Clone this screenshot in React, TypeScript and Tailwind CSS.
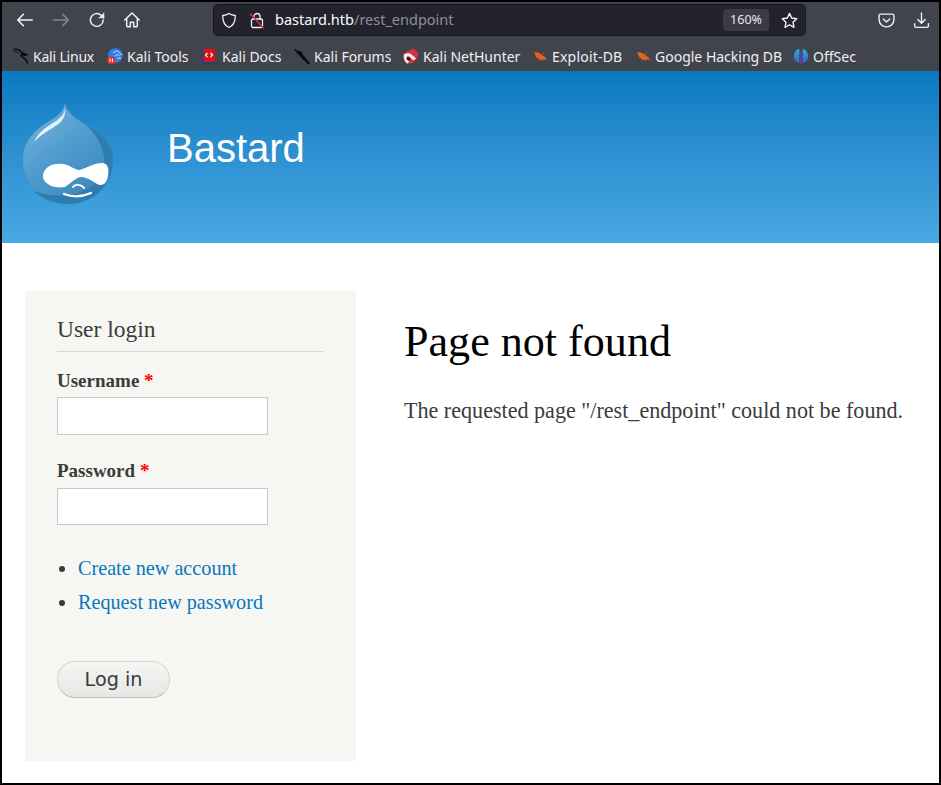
const bookmarks = [
  { name: "Kali Linux", icon: "kali", width: "w-[94px] tracking-[-0.2px]" },
  { name: "Kali Tools", icon: "tools", width: "w-[95px]" },
  { name: "Kali Docs", icon: "docs", width: "w-[92px]" },
  { name: "Kali Forums", icon: "forums", width: "w-[109px]" },
  { name: "Kali NetHunter", icon: "nethunter", width: "w-[129px]" },
  { name: "Exploit-DB", icon: "bug", width: "w-[103px] tracking-[0.2px]" },
  { name: "Google Hacking DB", icon: "bug", width: "w-[158px]" },
  { name: "OffSec", icon: "offsec", width: "" },
];

function BookmarkIcon({ type }: { type: string }) {
  if (type === "kali") {
    return (
      <svg width="16" height="16" viewBox="0 0 16 16" fill="none" stroke="#0b0b0b" strokeWidth="1.500" strokeLinecap="round">
        <path d="M1 1.500c3-.5 5.500.3 7 2.300 1.200 1.600 3 2.600 6.500 3-2.500.6-4.500.4-6-.3" />
        <path d="M8 6.500c-.5 1.800 1.500 2.800 3.500 4 1.500.9 2.500 2.500 3 4.500" />
        <path d="M1.500 3.500c1.500 0 3 .6 4 1.800" strokeWidth="1" />
      </svg>
    );
  }
  if (type === "tools") {
    return (
      <svg width="16" height="16" viewBox="0 0 16 16">
        <circle cx="8.300" cy="7.500" r="7.300" fill="#2f80e0" />
        <path d="M6 5c3-2.500 5-2.500 6-1 .8 1.200 1.500 2.500 3 3M8 8c2-1.500 3.500-1.500 4.500-.5M10 10.500c1-.6 2.500-.6 4 0" stroke="#cfe4fb" strokeWidth="0.900" fill="none" />
        <rect x="0.500" y="8.500" width="7.500" height="7.500" rx="2.500" fill="#e0322c" />
        <path d="M3 10.500v3.500M5.400 10.500v3.500" stroke="#fff" strokeWidth="1" />
      </svg>
    );
  }
  if (type === "docs") {
    return (
      <svg width="16" height="16" viewBox="0 0 16 16">
        <rect x="0" y="0.500" width="13" height="15.500" rx="1" fill="#1f3f7a" />
        <rect x="1.500" y="0.500" width="11.500" height="13.500" fill="#d7141a" />
        <path d="M5.500 5L3.500 7l2 2M8.500 5l2 2-2 2" stroke="#fff" strokeWidth="1.100" fill="none" />
      </svg>
    );
  }
  if (type === "forums") {
    return (
      <svg width="16" height="16" viewBox="0 0 16 16" fill="none" stroke="#0a0a0a" strokeLinecap="round">
        <path d="M1 1.500l4 3.500" strokeWidth="1.600" />
        <path d="M5 4.500l5 6" strokeWidth="3.200" />
        <path d="M10 10.500l4.500 4.500" strokeWidth="2.400" />
        <path d="M3 5.500l2-.5M7 3.500l.8 2" strokeWidth="1" />
      </svg>
    );
  }
  if (type === "nethunter") {
    return (
      <svg width="16" height="16" viewBox="0 0 16 16">
        <path d="M0.500 5.500L10.500 .5l5 4.500-1.500 5.500L9 15.500H3L.5 11z" fill="#d9303c" />
        <path d="M1 6.500c3-2 6-1.500 8 .5l4 3.500-2.500 2-3.500-3.500C5.500 7.500 3.500 8 3.300 10c-.1 1.500 1.200 2.700 3 3l-1.500 2.500C2 14.500 0 10 1 6.500z" fill="#f4f4f4" />
        <path d="M3.800 10c1-1.200 2.500-.8 3.700 1L6.300 13C4.800 12.500 3.400 11.300 3.800 10z" fill="#1c1c1c" />
      </svg>
    );
  }
  if (type === "bug") {
    return (
      <svg width="16" height="16" viewBox="0 0 16 16">
        <path d="M2 4.500C5 3.500 8 5 10 7c1.500 1 3 2 4.500 3.200-2 1.300-4.300 2-6.200 1.500C5.500 11 3.500 8 2 4.500z" fill="#e8601c" />
        <path d="M3.500 9.500L6 8.500M6.500 12.500L8 10.500M10.500 13l-.7-2.500M11.500 4.500L9.500 7M15 12l-3-1.300" stroke="#c9693a" strokeWidth="0.800" />
      </svg>
    );
  }
  return (
    <svg width="16" height="16" viewBox="0 0 16 16">
      <defs>
        <linearGradient id="offsecFill" x1="0" y1="0" x2="0" y2="1">
          <stop offset="0" stopColor="#27b4cf" />
          <stop offset="1" stopColor="#3a5fd0" />
        </linearGradient>
      </defs>
      <path d="M6.300 1C3 1.500 1 4.500 1 8s2 6.500 5.300 7z" fill="url(#offsecFill)" />
      <path d="M9.700 1C13 1.500 15 4.500 15 8s-2 6.500-5.300 7z" fill="url(#offsecFill)" />
      <rect x="7.300" y="3" width="1.400" height="13" fill="#6a3bc2" />
    </svg>
  );
}

function DrupalLogo() {
  return (
    <svg width="92" height="102" viewBox="0 0 92 102">
      <defs>
        <linearGradient id="dropFill" x1="0" y1="0" x2="0.7" y2="1">
          <stop offset="0" stopColor="#7bb8de" />
          <stop offset="0.55" stopColor="#4d9acd" />
          <stop offset="1" stopColor="#3a88bd" />
        </linearGradient>
      </defs>
      <path
        d="M42 0C43 8 50 14 62 21 78 30 90 40 90 57 90 82 70 101 45 101 20 101 0 82 0 57 0 38 12 27 25 19 33 14 41 9 42 0z"
        fill="url(#dropFill)"
      />
      <path d="M62 21C78 30 90 40 90 57 90 82 70 101 45 101 33 101 20 97 11 88 38 98 70 92 80 68 85 52 76 33 62 21z" fill="#2f7cae" />
      <path d="M42 5C42 11 37 16 27 22 20 26 14 32 11 39 18 31 27 27 34 22 40 18 43 12 42 5z" fill="#e3f1fa" />
      <path
        d="M20 72C22 62 32 60 40 61 47 62 52 67 56 67 62 66 72 59 80 60 86 61 86 68 85 73 84 80 80 84 74 81 68 77 63 74 58 74 52 75 47 81 42 84 33 86 19 82 20 72z"
        fill="#fff"
      />
      <path d="M50 84c2-3 8-3 11 1" stroke="#fff" strokeWidth="2" fill="none" strokeLinecap="round" />
      <path d="M41 91c8 3 18 3 27-1" stroke="#fff" strokeWidth="2.200" fill="none" strokeLinecap="round" />
    </svg>
  );
}

export default function App() {
  return (
    <div className="w-[941px] h-[785px] overflow-hidden border-2 border-black bg-white font-['Liberation_Serif',serif] text-[#3b3b3b]">
      <div className="h-[69px] bg-[#42444d] font-['Noto_Sans',sans-serif]">
        <div className="flex h-[36px] items-center">
          <div className="flex h-[36px] w-[211px] items-center text-[#f2f2f4]">
            <svg className="ml-[14px]" width="18" height="18" viewBox="0 0 16 16" fill="none" stroke="currentColor" strokeWidth="1.300" strokeLinecap="round" strokeLinejoin="round">
              <path d="M1.500 8h13M6.500 3l-5 5 5 5" />
            </svg>
            <svg className="ml-[18px] text-[#85868c]" width="18" height="18" viewBox="0 0 16 16" fill="none" stroke="currentColor" strokeWidth="1.300" strokeLinecap="round" strokeLinejoin="round">
              <path d="M1.500 8h13M9.500 3l5 5-5 5" />
            </svg>
            <svg className="ml-[18px]" width="18" height="18" viewBox="0 0 16 16" fill="none" stroke="currentColor" strokeWidth="1.300" strokeLinecap="round" strokeLinejoin="round">
              <path d="M13.500 8A5.700 5.700 0 1 1 11.700 3.800L14 6" />
              <path d="M14 1.800V6H9.800" fill="currentColor" strokeWidth="0.800" />
            </svg>
            <svg className="ml-[17px]" width="18" height="18" viewBox="0 0 16 16" fill="none" stroke="currentColor" strokeWidth="1.300" strokeLinecap="round" strokeLinejoin="round">
              <path d="M1.500 8L8 1.800 14.500 8M3.300 6.500V13a1 1 0 0 0 1 1h2.200v-4h3v4h2.200a1 1 0 0 0 1-1V6.500" />
            </svg>
          </div>
          <div className="flex h-[32px] w-[593px] items-center rounded-[5px] border border-[#17171c] bg-[#23232d] text-[14.500px]">
            <svg className="ml-[7px]" width="16" height="17" viewBox="0 0 16 17" fill="none" stroke="#f2f2f4" strokeWidth="1.300" strokeLinejoin="round">
              <path d="M8 1.500c2 1.200 4 1.800 6.300 2 0 5-1 9.800-6.300 12C2.700 13.300 1.700 8.500 1.700 3.500c2.300-.2 4.300-.8 6.300-2z" />
            </svg>
            <svg className="ml-[12px]" width="16" height="17" viewBox="0 0 16 17" fill="none" strokeLinecap="round">
              <path d="M5 7V4.500a3 3 0 0 1 6 0V7" stroke="#f2f2f4" strokeWidth="1.300" />
              <rect x="2.500" y="7" width="11" height="8.500" rx="1.500" stroke="#f2f2f4" strokeWidth="1.300" />
              <path d="M1.500 2l13 14" stroke="#e22850" strokeWidth="1.500" />
            </svg>
            <span className="ml-[10px] text-[#fbfbfe]">bastard.htb</span>
            <span className="text-[#8f8f98]">/rest_endpoint</span>
            <span className="ml-auto flex h-[22px] w-[46px] items-center justify-center rounded-[4px] bg-[#3b3b45] text-[12.500px] text-[#e6e6ea]">
              160%
            </span>
            <svg className="mr-[7px] ml-[12px]" width="17" height="17" viewBox="0 0 16 16" fill="none" stroke="#f2f2f4" strokeWidth="1.300" strokeLinejoin="round">
              <path d="M8 1.300l2 4.400 4.800.6-3.500 3.300.9 4.800L8 12l-4.200 2.400.9-4.800L1.200 6.300 6 5.700z" />
            </svg>
          </div>
          <svg className="ml-[72px]" width="17" height="17" viewBox="0 0 16 16" fill="none" stroke="#f2f2f4" strokeWidth="1.300" strokeLinecap="round" strokeLinejoin="round">
            <path d="M2.500 2h11A1.500 1.500 0 0 1 15 3.500V7a7 7 0 0 1-14 0V3.500A1.500 1.500 0 0 1 2.500 2z" />
            <path d="M5 6.500L8 9.300l3-2.800" />
          </svg>
          <svg className="ml-[18px]" width="17" height="17" viewBox="0 0 16 16" fill="none" stroke="#f2f2f4" strokeWidth="1.300" strokeLinecap="round" strokeLinejoin="round">
            <path d="M8 1v9M4.500 7L8 10.500 11.500 7M1.500 11v2a1.500 1.500 0 0 0 1.500 1.500h10a1.500 1.500 0 0 0 1.500-1.500v-2" />
          </svg>
        </div>
        <div className="flex h-[33px] items-center pl-[11px] pt-[3px] text-[14px] text-[#f0f0f2]">
          {bookmarks.map((b) => (
            <div key={b.name} className={`flex shrink-0 items-center gap-[4px] whitespace-nowrap ${b.width}`}>
              <BookmarkIcon type={b.icon} />
              <span>{b.name}</span>
            </div>
          ))}
        </div>
      </div>

      <header className="flex h-[172px] items-start bg-gradient-to-b from-[#0779bf] to-[#48a9e4]">
        <div className="ml-[21px] mt-[32px] w-[144px]">
          <DrupalLogo />
        </div>
        <h1 className="mt-[51px] font-['Liberation_Sans',sans-serif] text-[40px] leading-[52px] text-white">Bastard</h1>
      </header>

      <div className="flex items-start pt-[48px]">
        <aside className="ml-[23px] h-[470px] w-[331px] bg-[#f6f6f2] px-[32px] pt-[23px]">
          <h2 className="border-b border-[#d6d6d3] pb-[7px] text-[23.500px] leading-[30px] text-[#3b3b3b]">User login</h2>
          <label className="mt-[13px] mb-[1px] block text-[19px] font-bold leading-[31px]">
            Username <span className="text-[#ff0000]">*</span>
          </label>
          <input type="text" className="block h-[38px] w-[211px] border border-[#c8c8c8] bg-white" />
          <label className="mt-[19px] block text-[19px] font-bold leading-[34px]">
            Password <span className="text-[#ff0000]">*</span>
          </label>
          <input type="password" className="block h-[37px] w-[211px] border border-[#c8c8c8] bg-white" />
          <ul className="mt-[26px] list-disc pl-[21px] text-[20.200px] leading-[34px]">
            <li>
              <a href="#" className="text-[#0678be]">Create new account</a>
            </li>
            <li>
              <a href="#" className="text-[#0678be]">Request new password</a>
            </li>
          </ul>
          <button className="mt-[42px] h-[37px] w-[113px] rounded-[18px] border border-[#d5d5d1] border-b-[#bdbdb9] bg-gradient-to-b from-[#f5f5f4] to-[#e7e7e5] font-['DejaVu_Sans',sans-serif] text-[19.200px] leading-none text-[#3a3a3a]">
            Log in
          </button>
        </aside>
        <main className="ml-[48px] pt-[25px]">
          <h1 className="text-[44.100px] leading-[52px] text-black">Page not found</h1>
          <p className="mt-[26px] text-[22.100px] leading-[33px] text-[#3b3b3b]">
            The requested page "/rest_endpoint" could not be found.
          </p>
        </main>
      </div>
    </div>
  );
}
